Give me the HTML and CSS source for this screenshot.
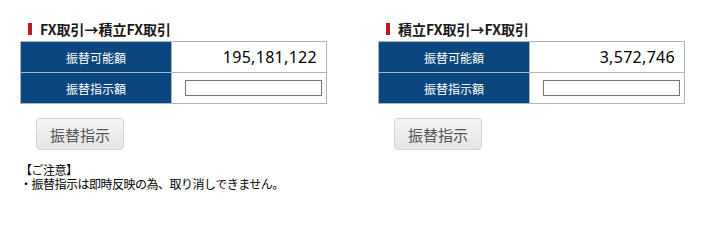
FILE: index.html
```html
<!DOCTYPE html>
<html lang="ja">
<head>
<meta charset="utf-8">
<link rel="stylesheet" href="styles.css">
</head>
<body>
<div class="page">
  <div class="panels">
    <section class="panel">
      <h2 class="title"><span class="bar"></span>FX取引→積立FX取引</h2>
      <table class="grid">
        <tr><th>振替可能額</th><td class="value">195,181,122</td></tr>
        <tr><th>振替指示額</th><td><input class="amount" type="text"></td></tr>
      </table>
      <button class="btn" type="button">振替指示</button>
    </section>
    <section class="panel">
      <h2 class="title"><span class="bar"></span>積立FX取引→FX取引</h2>
      <table class="grid">
        <tr><th>振替可能額</th><td class="value">3,572,746</td></tr>
        <tr><th>振替指示額</th><td><input class="amount" type="text"></td></tr>
      </table>
      <button class="btn" type="button">振替指示</button>
    </section>
  </div>
  <div class="notes">
    <p>【ご注意】</p>
    <p>・振替指示は即時反映の為、取り消しできません。</p>
  </div>
</div>
</body>
</html>
```
FILE: styles.css
```css
html, body {
  margin: 0;
  padding: 0;
  background: #fff;
}
body {
  font-family: "Noto Sans CJK JP", "Noto Sans", sans-serif;
  color: #000;
}
.page {
  padding: 19px 0 0 20px;
}
.panels {
  display: flex;
  gap: 51px;
}
.panel {
  width: 307px;
}
.title {
  display: flex;
  align-items: center;
  margin: 0 0 2px 8px;
  height: 20px;
  font-size: 14px;
  font-weight: bold;
  color: #1a1a1a;
  line-height: 20px;
}
.bar {
  display: inline-block;
  width: 4px;
  height: 12px;
  background: #c0141f;
  margin-right: 8px;
}
.grid {
  border-collapse: collapse;
  width: 307px;
}
.grid th, .grid td {
  border: 1px solid #a9b5c1;
  height: 30px;
  padding: 0;
}
.grid th {
  width: 150px;
  background: #0b477e;
  color: #fff;
  font-weight: normal;
  font-size: 12px;
  text-align: center;
}
.grid td.value {
  text-align: right;
  padding-right: 9px;
  font-family: "Noto Sans", sans-serif;
  font-size: 16px;
  letter-spacing: 0.3px;
  color: #000;
}
.amount {
  display: block;
  box-sizing: border-box;
  width: 137px;
  height: 16px;
  margin: 0 0 0 13px;
  border: 1px solid #767676;
  padding: 0;
}
.btn {
  display: block;
  margin: 14px 0 0 16px;
  width: 88px;
  height: 32px;
  border: 1px solid #d3d3d3;
  border-radius: 4px;
  background: linear-gradient(#f5f5f5, #e5e5e5);
  color: #555;
  font-family: "Noto Sans CJK JP", sans-serif;
  font-size: 15px;
  padding: 0;
}
.notes {
  margin-top: 13px;
  font-size: 12px;
  line-height: 14px;
  letter-spacing: -0.5px;
}
.notes p {
  margin: 0;
}
```
